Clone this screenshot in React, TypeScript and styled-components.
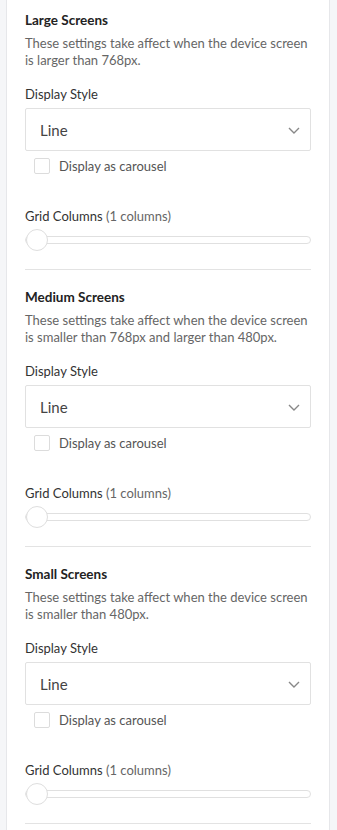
import React from "react";
import styled, { createGlobalStyle } from "styled-components";

const Global = createGlobalStyle`
  html, body { margin: 0; padding: 0; background: #f5f6f8; }
  body { font-family: Lato, "Open Sans", sans-serif; }
`;

const Panel = styled.div`
  margin-left: 6px;
  width: 324px;
  min-height: 830px;
  background: #fff;
  border-left: 1px solid #e6e7ea;
  border-right: 1px solid #e6e7ea;
  padding: 12px 18px 0;
  box-sizing: border-box;
`;

const Section = styled.section`
  display: flex;
  flex-direction: column;
  padding-bottom: 18px;
  border-bottom: 1px solid #e3e3e3;
  margin-bottom: 19px;
`;

const Heading = styled.h3`
  margin: 0;
  font-size: 13.5px;
  line-height: 16px;
  font-weight: 700;
  color: #222;
`;

const Desc = styled.p`
  margin: 7px 0 0;
  font-size: 13px;
  line-height: 17px;
  color: #666;
`;

const Label = styled.div<{ $gap: number }>`
  margin-top: ${(p) => p.$gap}px;
  font-size: 13px;
  line-height: 17px;
  color: #333;
`;

const Muted = styled.span`
  color: #666;
`;

const Select = styled.div`
  margin-top: 5px;
  height: 43px;
  box-sizing: border-box;
  border: 1px solid #e1e1e1;
  border-radius: 2px;
  display: flex;
  align-items: center;
  justify-content: space-between;
  padding: 0 9px 0 14px;
  font-size: 15px;
  color: #444;
`;

const CheckRow = styled.label`
  margin-top: 7px;
  margin-left: 9px;
  display: flex;
  align-items: center;
  gap: 9px;
  font-size: 13px;
  line-height: 16px;
  color: #555;
`;

const Box = styled.span`
  width: 16px;
  height: 16px;
  box-sizing: border-box;
  border: 1px solid #dcdcdc;
  border-radius: 2px;
  background: #fff;
`;

const Slider = styled.div`
  margin-top: 4px;
  height: 22px;
  position: relative;
  display: flex;
  align-items: center;
`;

const Track = styled.div`
  flex: 1;
  height: 8px;
  box-sizing: border-box;
  border: 1px solid #e0e0e0;
  border-radius: 4px;
  background: #fff;
`;

const Thumb = styled.div`
  position: absolute;
  left: 1px;
  top: 0;
  width: 22px;
  height: 22px;
  box-sizing: border-box;
  border-radius: 50%;
  border: 1px solid #dedede;
  background: #fff;
`;

const Chevron = () => (
  <svg width="14" height="14" viewBox="0 0 14 14">
    <path d="M2 5 L7 10 L12 5" fill="none" stroke="#888" strokeWidth="1.4" />
  </svg>
);

const sections = [
  { title: "Large Screens", desc: "These settings take affect when the device screen is larger than 768px." },
  { title: "Medium Screens", desc: "These settings take affect when the device screen is smaller than 768px and larger than 480px." },
  { title: "Small Screens", desc: "These settings take affect when the device screen is smaller than 480px." },
];

export default function App() {
  return (
    <>
      <Global />
      <Panel>
        {sections.map((s) => (
          <Section key={s.title}>
            <Heading>{s.title}</Heading>
            <Desc>{s.desc}</Desc>
            <Label $gap={17}>Display Style</Label>
            <Select>
              <span>Line</span>
              <Chevron />
            </Select>
            <CheckRow>
              <Box />
              Display as carousel
            </CheckRow>
            <Label $gap={34}>
              Grid Columns <Muted>(1 columns)</Muted>
            </Label>
            <Slider>
              <Track />
              <Thumb />
            </Slider>
          </Section>
        ))}
      </Panel>
    </>
  );
}
